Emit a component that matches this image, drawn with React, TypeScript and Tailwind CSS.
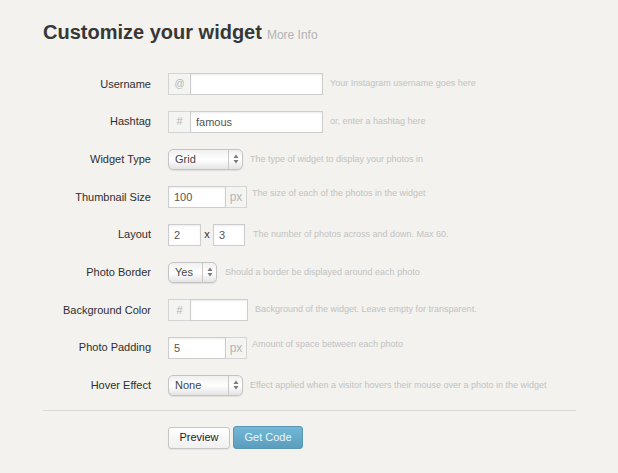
import React from "react";

const font = { fontFamily: '"Liberation Sans", Arial, sans-serif' };

const inputBox =
  "h-[22px] border border-[#cdcdcd] bg-white shadow-[inset_0_1px_2px_rgba(0,0,0,0.08)] text-[11px] text-[#555] px-[5px] outline-none";
const addon =
  "h-[22px] flex items-center justify-center border border-[#d4d4d4] bg-[#f4f4f2] text-[#b4b4b4]";

const Help = ({ children, className = "" }: { children: React.ReactNode; className?: string }) => (
  <span className={`text-[9px] leading-[11px] text-[#c2c2c2] ${className}`}>{children}</span>
);

const Arrows = () => (
  <svg width="6" height="10" viewBox="0 0 6 10">
    <path d="M3 0.5 L5.5 4 L0.5 4 Z" fill="#7a7a7a" />
    <path d="M3 9.5 L5.5 6 L0.5 6 Z" fill="#7a7a7a" />
  </svg>
);

const FakeSelect = ({ value, width }: { value: string; width: string }) => (
  <div
    className={`${width} h-[21px] flex items-stretch rounded-[5px] border border-[#c4c4c4] bg-gradient-to-b from-[#f0f0f0] via-[#ffffff] to-[#e4e4e4] shadow-[0_1px_1px_rgba(0,0,0,0.08)]`}
  >
    <span className="flex-1 flex items-center pl-[6px] text-[11px] text-[#444]">{value}</span>
    <span className="w-[14px] flex items-center justify-center border-l border-[#c8c8c8]">
      <Arrows />
    </span>
  </div>
);

const Row = ({ label, children }: { label: string; children: React.ReactNode }) => (
  <div className="flex items-center h-[37.7px]">
    <label className="w-[108px] text-right text-[11px] text-[#2e2e2e] shrink-0">{label}</label>
    <div className="ml-[17px] flex items-center">{children}</div>
  </div>
);

export default function App() {
  return (
    <div className="min-h-screen w-full bg-[#f3f2ee] pl-[43px] pr-[42px] pt-[20px]" style={font}>
      <div className="flex items-baseline">
        <h1 className="text-[20px] leading-[24px] font-bold text-[#373737]">Customize your widget</h1>
        <a className="ml-[5px] text-[12px] text-[#b3b3b3]">More Info</a>
      </div>

      <div className="mt-[21px]">
        <Row label="Username">
          <span className={`${addon} w-[22px] border-r-0 text-[10px]`}>@</span>
          <input className={`${inputBox} w-[133px]`} defaultValue="" />
          <Help className="ml-[7px]">Your Instagram username goes here</Help>
        </Row>

        <Row label="Hashtag">
          <span className={`${addon} w-[22px] border-r-0 text-[11px]`}>#</span>
          <input className={`${inputBox} w-[133px]`} defaultValue="famous" />
          <Help className="ml-[7px]">or, enter a hashtag here</Help>
        </Row>

        <Row label="Widget Type">
          <FakeSelect value="Grid" width="w-[75px]" />
          <Help className="ml-[7px]">The type of widget to display your photos in</Help>
        </Row>

        <Row label="Thumbnail Size">
          <div className="flex items-start">
            <input className={`${inputBox} w-[58px]`} defaultValue="100" />
            <span className={`${addon} w-[21px] border-l-0 text-[12px]`}>px</span>
            <Help className="ml-[5px] pt-[2px]">The size of each of the photos in the widget</Help>
          </div>
        </Row>

        <Row label="Layout">
          <input className={`${inputBox} w-[33px]`} defaultValue="2" />
          <span className="w-[12px] text-center text-[11px] text-[#333]">x</span>
          <input className={`${inputBox} w-[32px]`} defaultValue="3" />
          <Help className="ml-[8px]">The number of photos across and down. Max 60.</Help>
        </Row>

        <Row label="Photo Border">
          <FakeSelect value="Yes" width="w-[49px]" />
          <Help className="ml-[8px]">Should a border be displayed around each photo</Help>
        </Row>

        <Row label="Background Color">
          <span className={`${addon} w-[22px] border-r-0 text-[11px]`}>#</span>
          <input className={`${inputBox} w-[58px]`} defaultValue="" />
          <Help className="ml-[7px]">Background of the widget. Leave empty for transparent.</Help>
        </Row>

        <Row label="Photo Padding">
          <div className="flex items-start">
            <input className={`${inputBox} w-[58px]`} defaultValue="5" />
            <span className={`${addon} w-[21px] border-l-0 text-[12px]`}>px</span>
            <Help className="ml-[5px] pt-[2px]">Amount of space between each photo</Help>
          </div>
        </Row>

        <Row label="Hover Effect">
          <FakeSelect value="None" width="w-[75px]" />
          <Help className="ml-[7px]">Effect applied when a visitor hovers their mouse over a photo in the widget</Help>
        </Row>
      </div>

      <div className="mt-[6px] border-t border-[#dcdbd6]" />

      <div className="mt-[15px] ml-[125px] flex items-center gap-[3px]">
        <button className="h-[22px] w-[62px] rounded-[3px] border border-[#c6c6c6] bg-gradient-to-b from-white to-[#f0f0f0] text-[11px] text-[#222] shadow-[0_1px_1px_rgba(0,0,0,0.06)]">
          Preview
        </button>
        <button className="h-[23px] w-[70px] rounded-[3px] border border-[#5a98b6] bg-gradient-to-b from-[#74b8d8] to-[#5a9dbd] text-[11px] text-[#eef6fa]">
          Get Code
        </button>
      </div>
    </div>
  );
}
